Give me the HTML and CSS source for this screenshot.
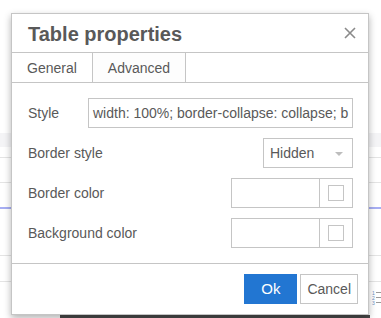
FILE: index.html
```html
<!DOCTYPE html>
<html>
<head>
<meta charset="utf-8">
<link rel="stylesheet" href="styles.css">
</head>
<body>
<div class="page">
  <div class="band"></div>
  <div class="hline l1"></div>
  <div class="hline l2"></div>
  <div class="bline"></div>
  <div class="hline l3"></div>
  <div class="hline l4"></div>
  <div class="iconrow">
    <svg width="9" height="16" viewBox="0 0 9 16">
      <text x="0" y="5" class="num">1</text>
      <text x="0" y="10" class="num">2</text>
      <text x="0" y="15" class="num">3</text>
      <rect x="4" y="2" width="5" height="1" fill="#9a9a9a"/>
      <rect x="4" y="7" width="5" height="1" fill="#9a9a9a"/>
      <rect x="4" y="12" width="5" height="1" fill="#9a9a9a"/>
    </svg>
  </div>
  <div class="darkstrip"></div>
</div>

<div class="dialog">
  <div class="head">
    <div class="title">Table properties</div>
    <svg class="close" width="12" height="12" viewBox="0 0 12 12">
      <path d="M1 1 L11 11 M11 1 L1 11" stroke="#8a8a8a" stroke-width="1.6" fill="none"/>
    </svg>
  </div>
  <div class="tabs">
    <div class="tab">General</div>
    <div class="tab active">Advanced</div>
  </div>
  <div class="body">
    <div class="row">
      <div class="label">Style</div>
      <div class="textbox style-box">width: 100%; border-collapse: collapse; b</div>
    </div>
    <div class="row">
      <div class="label">Border style</div>
      <div class="select">
        <span>Hidden</span>
        <span class="caret"></span>
      </div>
    </div>
    <div class="row">
      <div class="label">Border color</div>
      <div class="colorbox">
        <div class="colorfield"></div>
        <div class="colorpick"><div class="swatch"></div></div>
      </div>
    </div>
    <div class="row">
      <div class="label">Background color</div>
      <div class="colorbox">
        <div class="colorfield"></div>
        <div class="colorpick"><div class="swatch"></div></div>
      </div>
    </div>
  </div>
  <div class="foot">
    <button class="btn primary">Ok</button>
    <button class="btn">Cancel</button>
  </div>
</div>
</body>
</html>
```

FILE: styles.css
```css
html, body {
  margin: 0;
  padding: 0;
}
body {
  background: #ffffff;
  font-family: "Liberation Sans", Arial, sans-serif;
  width: 381px;
  height: 318px;
  overflow: hidden;
  position: relative;
}
.page {
  display: flex;
  flex-direction: column;
}
.band {
  margin-top: 133px;
  height: 14px;
  background: #f4f4f6;
}
.hline {
  height: 1px;
  background: #e4e4e4;
}
.l1 { margin-top: 10px; }
.l2 { margin-top: 24px; }
.bline {
  margin-top: 24px;
  height: 2px;
  background: #a7aef3;
}
.l3 { margin-top: 46px; }
.l4 { margin-top: 25px; }
.iconrow {
  margin-top: 8px;
  height: 16px;
  display: flex;
  justify-content: flex-end;
  padding-right: 0;
}
.num {
  font-family: "Liberation Sans", Arial, sans-serif;
  font-size: 5px;
  fill: #6a8fc0;
}
.darkstrip {
  margin-top: 9px;
  margin-left: 60px;
  width: 310px;
  height: 3px;
  background: #4a4a4a;
}

.dialog {
  position: absolute;
  left: 11px;
  top: 13px;
  width: 356px;
  height: 300px;
  border: 1px solid #c5c5c5;
  background: #ffffff;
  box-shadow: 0 3px 7px rgba(0, 0, 0, 0.3);
  display: flex;
  flex-direction: column;
  color: #595959;
}
.head {
  height: 38px;
  padding: 0 12px 0 16px;
  border-bottom: 1px solid #c5c5c5;
  display: flex;
  align-items: center;
  justify-content: space-between;
}
.title {
  font-size: 20px;
  line-height: 20px;
  font-weight: bold;
  color: #595959;
  padding-top: 1px;
}
.close {
  margin-right: 0;
}
.tabs {
  height: 29px;
  display: flex;
  border-bottom: 1px solid #c5c5c5;
}
.tab {
  padding: 0 15px;
  font-size: 14px;
  line-height: 31px;
  border-right: 1px solid #c5c5c5;
  background: #ffffff;
  color: #595959;
}
.tab.active {
  background: #fdfdfd;
}
.body {
  flex: 1;
  padding: 15px 15px 14px 16px;
  display: flex;
  flex-direction: column;
  gap: 10px;
}
.row {
  height: 30px;
  display: flex;
  align-items: center;
  justify-content: space-between;
}
.label {
  font-size: 14px;
  color: #595959;
}
.textbox {
  box-sizing: border-box;
  height: 30px;
  border: 1px solid #c5c5c5;
  font-size: 14px;
  line-height: 28px;
  color: #595959;
  white-space: nowrap;
  overflow: hidden;
}
.style-box {
  width: 265px;
  padding: 0 4px;
}
.select {
  box-sizing: border-box;
  width: 90px;
  height: 30px;
  border: 1px solid #c5c5c5;
  font-size: 14px;
  line-height: 28px;
  padding: 0 9px 0 6px;
  display: flex;
  justify-content: space-between;
  align-items: center;
  color: #595959;
}
.caret {
  width: 0;
  height: 0;
  border-left: 4px solid transparent;
  border-right: 4px solid transparent;
  border-top: 4px solid #bdbdbd;
  margin-top: 1px;
}
.colorbox {
  box-sizing: border-box;
  width: 122px;
  height: 30px;
  border: 1px solid #c5c5c5;
  display: flex;
}
.colorfield {
  width: 87px;
  border-right: 1px solid #c5c5c5;
}
.colorpick {
  flex: 1;
  display: flex;
  align-items: center;
  justify-content: center;
  padding-right: 1px;
}
.swatch {
  box-sizing: border-box;
  width: 16px;
  height: 16px;
  border: 1px solid #c5c5c5;
  background: #ffffff;
}
.foot {
  height: 30px;
  border-top: 1px solid #c5c5c5;
  padding: 10px 10px 10px 10px;
  display: flex;
  justify-content: flex-end;
  gap: 3px;
}
.btn {
  box-sizing: border-box;
  height: 30px;
  font-family: "Liberation Sans", Arial, sans-serif;
  font-size: 14px;
  line-height: 20px;
  padding: 0 6px;
  border: 1px solid #c5c5c5;
  background: #ffffff;
  color: #595959;
  margin: 0;
  border-radius: 0;
}
.btn.primary {
  width: 53px;
  background: #2276d2;
  border-color: #2276d2;
  color: #ffffff;
  font-size: 15px;
}
```
